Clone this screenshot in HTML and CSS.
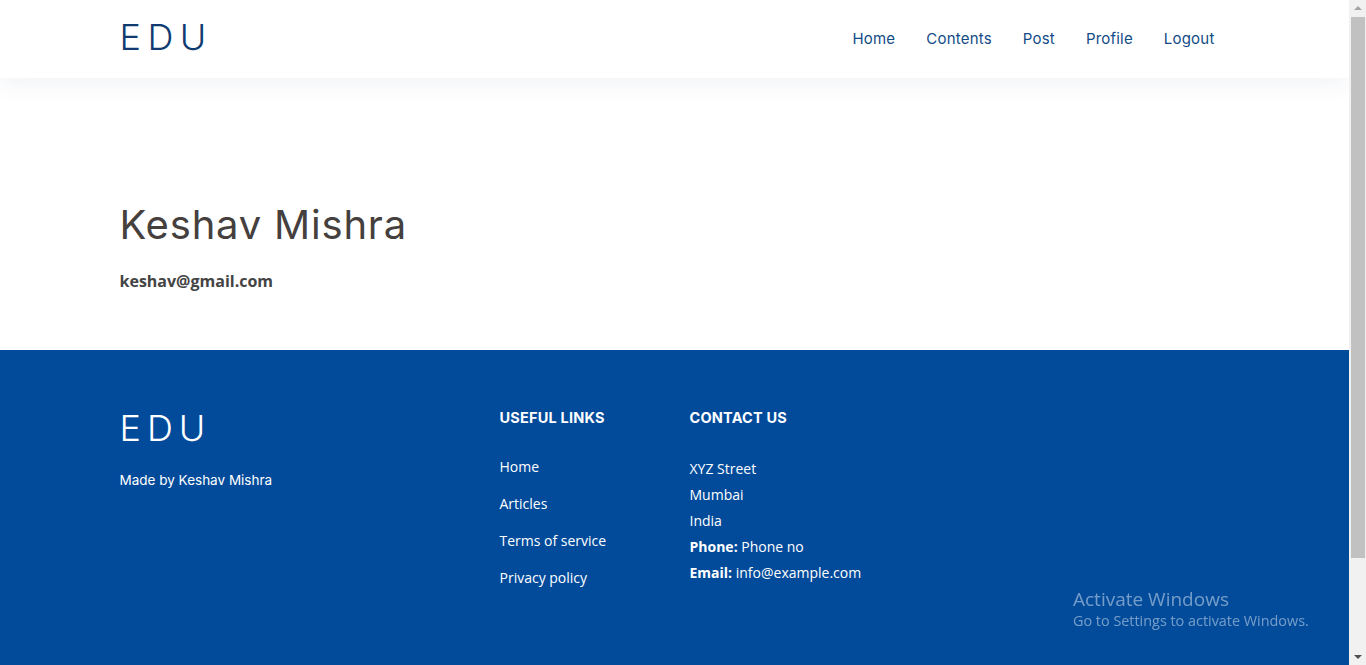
FILE: index.html
```html
<!DOCTYPE html>
<html lang="en">
<head>
<meta charset="utf-8">
<title>EDU</title>
<link rel="stylesheet" href="styles.css">
</head>
<body>
<header class="header">
  <div class="container header-row">
    <a class="logo" href="#">EDU</a>
    <nav class="nav">
      <a href="#">Home</a>
      <a href="#">Contents</a>
      <a href="#">Post</a>
      <a href="#">Profile</a>
      <a href="#">Logout</a>
    </nav>
  </div>
</header>
<main class="profile">
  <div class="container">
    <h1 class="name">Keshav Mishra</h1>
    <p class="email">keshav@gmail.com</p>
  </div>
</main>
<footer class="footer">
  <div class="container footer-row">
    <div class="col col-brand">
      <h3 class="f-logo">EDU</h3>
      <p class="made">Made by Keshav Mishra</p>
    </div>
    <div class="col col-links">
      <h4 class="f-title">USEFUL LINKS</h4>
      <ul class="links">
        <li><a href="#">Home</a></li>
        <li><a href="#">Articles</a></li>
        <li><a href="#">Terms of service</a></li>
        <li><a href="#">Privacy policy</a></li>
      </ul>
    </div>
    <div class="col col-contact">
      <h4 class="f-title">CONTACT US</h4>
      <p class="contact">XYZ Street<br>Mumbai<br>India<br><strong>Phone:</strong> Phone no<br><strong>Email:</strong> info@example.com</p>
    </div>
  </div>
</footer>
<div class="watermark">
  <div class="wm-title">Activate Windows</div>
  <div class="wm-sub">Go to Settings to activate Windows.</div>
</div>
<div class="scrollbar" aria-hidden="true">
  <span class="sb-arrow sb-up"></span>
  <span class="sb-thumb"></span>
  <span class="sb-arrow sb-down"></span>
</div>
</body>
</html>
```
FILE: styles.css
```css
* { box-sizing: border-box; }
html, body { margin: 0; padding: 0; }
html { overflow: hidden; }
body {
  font-family: "Open Sans", "Liberation Sans", sans-serif;
  color: #444;
  background: #fff;
  margin-right: 17px;
}
a { text-decoration: none; }
.container {
  width: 1140px;
  margin: 0 auto;
  padding: 0 15px;
}
.header {
  height: 78px;
  background: #fff;
  box-shadow: 0 4px 24px rgba(25, 60, 120, 0.07);
  position: relative;
  z-index: 2;
}
.header-row {
  height: 78px;
  display: flex;
  align-items: center;
  justify-content: space-between;
}
.logo {
  font-family: Inter, "Open Sans", sans-serif;
  font-weight: 300;
  font-size: 36px;
  letter-spacing: 6.5px;
  color: #0f3b70;
  line-height: 1;
  margin-top: -4px;
}
.nav {
  display: flex;
  padding-right: 15px;
  margin-top: -2px;
}
.nav a {
  font-family: Inter, "Open Sans", sans-serif;
  font-size: 15px;
  letter-spacing: 0.2px;
  color: #124b86;
  margin-left: 31px;
}
.profile {
  height: 272px;
  padding-top: 123px;
}
.name {
  font-family: Inter, "Open Sans", sans-serif;
  font-weight: 400;
  font-size: 40px;
  letter-spacing: 0.8px;
  line-height: 48px;
  margin: 0;
  color: #45403d;
}
.email {
  font-weight: 700;
  font-size: 16px;
  margin: 21px 0 0;
  color: #444;
}
.footer {
  background: #024b9b;
  color: #fff;
  height: 430px;
  padding-top: 60px;
}
.footer-row { display: flex; }
.col { padding: 0 15px; }
.col-brand { width: 365px; padding-left: 0; }
.col-links { width: 190px; }
.col-contact { width: 300px; }
.f-logo {
  font-family: Inter, "Open Sans", sans-serif;
  font-weight: 300;
  font-size: 36px;
  letter-spacing: 6px;
  margin: 0;
  line-height: 1;
}
.made {
  font-family: Inter, "Open Sans", sans-serif;
  font-size: 13.5px;
  margin: 26px 0 0;
}
.f-title {
  font-family: Inter, "Open Sans", sans-serif;
  font-weight: 700;
  font-size: 14.5px;
  letter-spacing: 0.2px;
  margin: 0;
  line-height: 16px;
}
.links {
  list-style: none;
  padding: 0;
  margin: 31px 0 0;
}
.links li {
  font-size: 14px;
  line-height: 20px;
  margin-bottom: 17px;
}
.links a { color: #fff; }
.contact {
  font-size: 14px;
  line-height: 26px;
  margin: 30px 0 0;
}
.watermark {
  position: fixed;
  left: 1073px;
  top: 587px;
  color: rgba(255, 255, 255, 0.45);
  font-family: "Open Sans", "Liberation Sans", sans-serif;
  pointer-events: none;
}
.wm-title { font-size: 19px; line-height: 24px; }
.wm-sub { font-size: 14.4px; line-height: 20px; }
.scrollbar {
  position: fixed;
  top: 0;
  right: 0;
  width: 17px;
  height: 100%;
  background: #f1f1f1;
  display: flex;
  flex-direction: column;
  align-items: center;
}
.sb-arrow {
  width: 0;
  height: 0;
  border-left: 4px solid transparent;
  border-right: 4px solid transparent;
}
.sb-up {
  margin-top: 6px;
  border-bottom: 4px solid #a3a3a3;
}
.sb-thumb {
  width: 14px;
  margin: 7px 0 0 1px;
  height: 541px;
  background: #c1c1c1;
}
.sb-down {
  margin-top: auto;
  margin-bottom: 6px;
  border-top: 4px solid #505050;
}
```
